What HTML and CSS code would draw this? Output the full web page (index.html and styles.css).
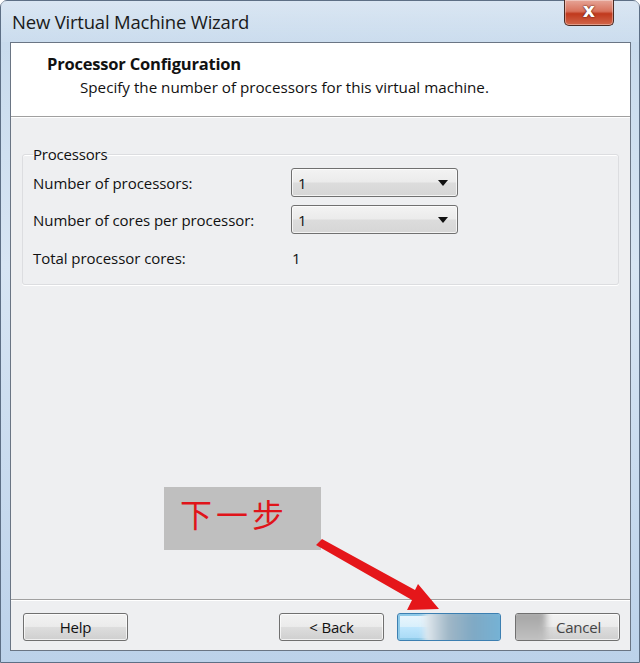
FILE: index.html
```html
<!DOCTYPE html>
<html>
<head>
<meta charset="utf-8">
<link rel="stylesheet" href="styles.css">
</head>
<body>
<div class="window">
  <div class="titlebar">
    <span class="title">New Virtual Machine Wizard</span>
    <div class="close"><span>x</span></div>
  </div>
  <div class="client">
    <div class="header">
      <div class="h-title">Processor Configuration</div>
      <div class="h-sub">Specify the number of processors for this virtual machine.</div>
    </div>
    <div class="body">
      <fieldset class="group">
        <legend>Processors</legend>
        <div class="row">
          <span class="label">Number of processors:</span>
          <div class="combo"><span>1</span><i class="caret"></i></div>
        </div>
        <div class="row">
          <span class="label">Number of cores per processor:</span>
          <div class="combo"><span>1</span><i class="caret"></i></div>
        </div>
        <div class="row total">
          <span class="label">Total processor cores:</span>
          <span class="value">1</span>
        </div>
      </fieldset>
    </div>
    <div class="footer">
      <button class="btn">Help</button>
      <div class="spacer"></div>
      <button class="btn">&lt; Back</button>
      <button class="btn next"><span class="blur b1"></span></button>
      <button class="btn cancel"><span class="blur b2"></span><span class="ctext">Cancel</span></button>
    </div>
  </div>
  <div class="callout">下一步</div>
  <svg class="arrow" width="140" height="80" viewBox="0 0 140 80">
    <polygon points="1,6 7,0 100,51 103,45 124,70 92,71 97,61" fill="#e5161a"/>
  </svg>
</div>
</body>
</html>
```
FILE: styles.css
```css
html, body {
  margin: 0;
  padding: 0;
  width: 640px;
  height: 663px;
  overflow: hidden;
  background: #fff;
}
.window {
  position: relative;
  width: 640px;
  height: 663px;
  box-sizing: border-box;
  display: flex;
  flex-direction: column;
  background: linear-gradient(180deg, #c6d9ec 0%, #d7e5f3 40%, #bcd2ea 100%);
  border: 1px solid #5d6f85;
  border-radius: 7px 7px 0 0;
  font-family: "Open Sans", "Noto Sans", sans-serif;
  color: #111;
}
.titlebar {
  height: 41px;
  position: relative;
  display: flex;
  align-items: center;
  padding-left: 11px;
  background: linear-gradient(180deg, rgba(255,255,255,0.35) 0%, rgba(255,255,255,0.05) 100%);
}
.title {
  font-size: 18.5px;
  color: #1a1a1a;
  letter-spacing: -0.2px;
  margin-top: -1px;
}
.close {
  position: absolute;
  right: 25px;
  top: -1px;
  width: 50px;
  height: 26px;
  box-sizing: border-box;
  border: 1px solid #4a2a22;
  border-top: none;
  border-radius: 0 0 5px 5px;
  background: linear-gradient(180deg, #e6a597 0%, #d8725c 45%, #c0391d 55%, #d2664a 100%);
  box-shadow: inset 0 0 0 1px rgba(255,255,255,0.35);
  display: flex;
  align-items: center;
  justify-content: center;
}
.close span {
  font-family: "DejaVu Sans", sans-serif;
  font-weight: bold;
  font-size: 19px;
  color: #fff;
  line-height: 1;
  margin-top: -4px;
  text-shadow: 0 0 2px #5a1a10, 0 0 1px #5a1a10;
}
.client {
  flex: 1;
  margin: 0 8px 11px 9px;
  border: 1px solid #6a7584;
  background: #eeeff1;
  display: flex;
  flex-direction: column;
}
.header {
  height: 74px;
  background: #fff;
  border-bottom: 1px solid #a0a0a0;
  padding: 10px 0 0 36px;
  box-sizing: border-box;
}
.h-title {
  font-weight: bold;
  font-size: 16.5px;
  letter-spacing: -0.2px;
  line-height: 22px;
}
.h-sub {
  margin-top: 1px;
  padding-left: 33px;
  font-size: 15.2px;
  letter-spacing: 0;
  line-height: 22px;
}
.body {
  flex: 1;
  border-top: 1px solid #fff;
  padding: 26px 11px 0 11px;
}
.group {
  margin: 0;
  border: 1px solid #dcdde0;
  border-radius: 3px;
  padding: 0 10px 12px 10px;
  height: 141px;
  box-sizing: border-box;
  box-shadow: 0 1px 0 #fff, inset 0 1px 0 #fff;
}
.group legend {
  padding: 0;
  margin-left: 0;
  font-size: 15px;
  letter-spacing: -0.2px;
}
.row {
  display: flex;
  align-items: center;
  height: 37px;
  font-size: 15px;
  letter-spacing: -0.05px;
}
.row.total {
  height: 40px;
}
.label {
  width: 258px;
}
.value {
  padding-left: 1px;
}
.combo {
  width: 167px;
  height: 29px;
  box-sizing: border-box;
  border: 1px solid #707070;
  border-radius: 3px;
  background: linear-gradient(180deg, #f3f3f3 0%, #ebebeb 48%, #dcdcdc 52%, #d6d6d6 100%);
  box-shadow: inset 0 0 0 1px rgba(255,255,255,0.7);
  display: flex;
  align-items: center;
  justify-content: space-between;
  padding: 0 9px 0 6px;
  font-size: 15px;
}
.caret {
  width: 0;
  height: 0;
  border-left: 5px solid transparent;
  border-right: 5px solid transparent;
  border-top: 6px solid #111;
}
.footer {
  height: 51px;
  box-sizing: border-box;
  border-top: 1px solid #a0a0a0;
  box-shadow: inset 0 1px 0 #fff;
  display: flex;
  align-items: flex-start;
  padding: 13px 10px 0 12px;
  gap: 13px;
}
.spacer {
  flex: 1;
}
.btn {
  position: relative;
  width: 105px;
  height: 28px;
  margin: 0;
  border: 1px solid #707070;
  border-radius: 3px;
  background: linear-gradient(180deg, #f2f2f2 0%, #ebebeb 48%, #dddddd 52%, #cfcfcf 100%);
  box-shadow: inset 0 0 0 1px rgba(255,255,255,0.7);
  font-family: "Open Sans", "Noto Sans", sans-serif;
  font-size: 15px;
  color: #111;
  letter-spacing: -0.2px;
  padding: 0;
  overflow: hidden;
}
.btn.next {
  width: 104px;
  border-color: #3c7fb1;
  background: linear-gradient(180deg, #eaf6fd 0%, #d9f0fc 48%, #bee6fd 52%, #a7d9f5 100%);
  box-shadow: inset 0 0 0 2px #8ecae9;
}
.btn.cancel {
  margin-left: 1px;
}
.blur {
  position: absolute;
  filter: blur(3px);
}
.b1 {
  left: 26px;
  top: -4px;
  width: 82px;
  height: 36px;
  background: linear-gradient(90deg, #e8eef2 0%, #9fb6c6 30%, #7fa9c4 60%, #73b4d8 100%);
}
.b2 {
  left: -6px;
  top: -4px;
  width: 36px;
  height: 36px;
  background: linear-gradient(180deg, #a0a0a0, #c8c8c8);
}
.ctext {
  position: relative;
  padding-left: 22px;
  color: #444;
}
.callout {
  position: absolute;
  left: 163px;
  top: 486px;
  width: 157px;
  height: 63px;
  background: #bfbfbf;
  color: #e0141a;
  font-family: "Noto Sans CJK SC", sans-serif;
  font-size: 32px;
  letter-spacing: 4px;
  line-height: 52px;
  padding-left: 16px;
  box-sizing: border-box;
}
.arrow {
  position: absolute;
  left: 314px;
  top: 538px;
}
```
